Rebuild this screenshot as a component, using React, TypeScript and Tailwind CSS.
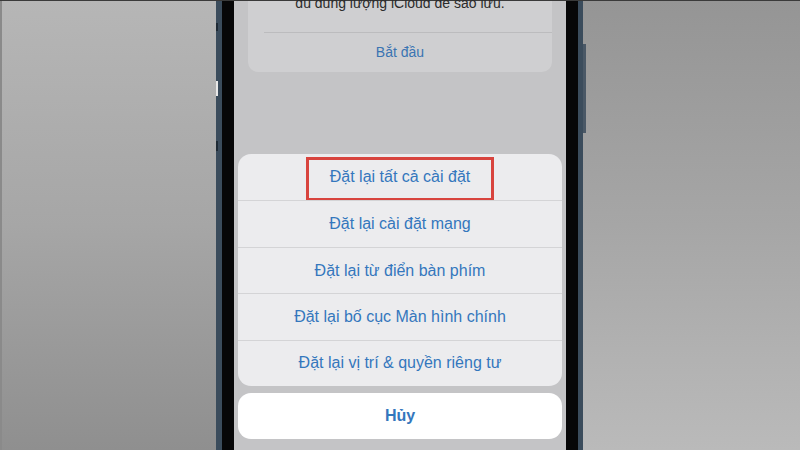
const options = [
  "Đặt lại tất cả cài đặt",
  "Đặt lại cài đặt mạng",
  "Đặt lại từ điển bàn phím",
  "Đặt lại bố cục Màn hình chính",
  "Đặt lại vị trí & quyền riêng tư",
];

export default function App() {
  return (
    <div className="w-[800px] h-[450px] flex overflow-hidden bg-[#3a3a3a] pt-px font-['Liberation_Sans',Arial,sans-serif]">
      <div className="w-[216px] h-full bg-gradient-to-b from-[#b6b6b6] via-[#a6a6a6] to-[#8f8f8f] border-l-2 border-[#8a8a8a]" />

      <div className="relative w-[367px] h-full flex">
        <div className="w-[6px] h-full bg-[#3b4c5c]" />
        <div className="w-[12px] h-full bg-[#070708]" />

        <div className="w-[332px] h-full flex flex-col bg-[#c4c4c6] pb-[2px]">
          {/* dimmed settings card */}
          <div className="mx-[14px] bg-[#cfcfd1] rounded-b-[10px] flex flex-col">
            <div className="mt-[-8px] h-[20px] leading-[20px] text-center text-[14px] text-[#2b2b2b]">
              đủ dung lượng iCloud để sao lưu.
            </div>
            <div className="mt-[19px] ml-[16px] h-px bg-[#bcbcbe]" />
            <div className="h-[39px] flex items-center justify-center text-[14px] text-[#3a74b2]">
              Bắt đầu
            </div>
          </div>

          <div className="flex-1" />

          {/* action sheet */}
          <div className="mx-[4px] rounded-[13px] bg-[#ececee] flex flex-col overflow-hidden">
            {options.map((label, i) => (
              <div
                key={label}
                className={
                  "relative h-[46.4px] flex items-center justify-center text-[16px] text-[#3477bd] " +
                  (i > 0 ? "border-t border-[#d4d4d6]" : "")
                }
              >
                {label}
                {i === 0 && (
                  <div className="absolute left-1/2 -translate-x-1/2 top-[3px] w-[188px] h-[44px] border-[3px] border-[#d8443e]" />
                )}
              </div>
            ))}
          </div>

          <div className="mx-[4px] mt-[7px] mb-[9px] h-[46px] rounded-[13px] bg-white flex items-center justify-center text-[16px] font-bold text-[#3477bd]">
            Hủy
          </div>
        </div>

        <div className="w-[12px] h-full bg-[#070708]" />
        <div className="w-[5px] h-full bg-[#3b4c5c]" />

        {/* side buttons */}
        <div className="absolute left-0 top-[22px] w-[2px] h-[8px] bg-[#1e2a35]" />
        <div className="absolute left-0 top-[80px] w-[2px] h-[15px] bg-[#e8e8e8]" />
        <div className="absolute left-0 top-[140px] w-[2px] h-[10px] bg-[#1e2a35]" />
        <div className="absolute right-[-3px] top-[43px] w-[3px] h-[89px] bg-[#4a5866]" />
      </div>

      <div className="w-[217px] h-full bg-gradient-to-t from-[#bababa] via-[#a6a6a6] to-[#959595]" />
    </div>
  );
}
